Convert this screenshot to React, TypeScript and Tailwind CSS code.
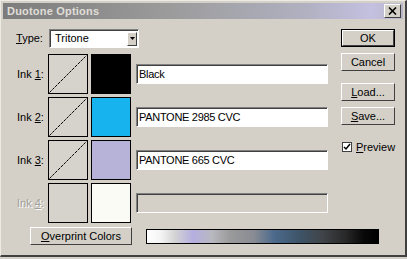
import React from "react";

const font = { fontFamily: '"Liberation Sans", Arial, sans-serif' };

function Btn({ children, def = false, w = "w-[54px]" }: { children: React.ReactNode; def?: boolean; w?: string }) {
  return (
    <div className={`${w} h-[18px] shrink-0 ${def ? "border border-black" : ""}`}>
      <div className="h-full w-full border-t border-l border-t-white border-l-white border-r border-b border-r-[#404040] border-b-[#404040] flex items-center justify-center text-[11px] text-black bg-[#d4d0c8] whitespace-nowrap">
        {children}
      </div>
    </div>
  );
}

function Field({ text, disabled = false }: { text?: string; disabled?: boolean }) {
  return (
    <div className="w-[192px] h-[20px] border-t border-l border-t-[#808080] border-l-[#808080] border-r border-b border-r-white border-b-white">
      <div className={`h-full w-full border-t border-l border-t-[#404040] border-l-[#404040] ${disabled ? "bg-[#d4d0c8]" : "bg-white"} flex items-center pl-[1px] text-[11px] text-black tracking-[-0.3px]`}>
        {text}
      </div>
    </div>
  );
}

function Curve({ line = true }: { line?: boolean }) {
  return (
    <div className="w-[40px] h-[40px] shrink-0 border border-black bg-[#d6d3cc] relative">
      {line && (
        <svg width="38" height="38" className="absolute left-0 top-0">
          <line x1="0.5" y1="37.5" x2="37.5" y2="0.5" stroke="#000" strokeWidth="1" strokeDasharray="3 1" />
        </svg>
      )}
    </div>
  );
}

function InkRow({ n, color, text, disabled = false }: { n: string; color: string; text?: string; disabled?: boolean }) {
  return (
    <div className="flex items-center h-[40px]">
      <div className={`w-[45px] shrink-0 pl-[14px] text-[11px] whitespace-nowrap ${disabled ? "text-[#a09e98] [text-shadow:1px_1px_0_#ffffff]" : "text-black"}`}>
        Ink <span className="underline">{n}</span>:
      </div>
      <Curve line={!disabled} />
      <div className="ml-[3px] w-[40px] h-[40px] shrink-0 border border-black" style={{ backgroundColor: color }} />
      <div className="ml-[5px]">
        <Field text={text} disabled={disabled} />
      </div>
    </div>
  );
}

export default function App() {
  return (
    <div style={font} className="w-[407px] h-[259px] bg-[#d4d0c8] overflow-hidden">
      <div className="w-[407px] h-[257px] border-t border-l border-t-[#ecebe6] border-l-[#ecebe6] border-r-2 border-b-2 border-r-[#404040] border-b-[#404040] p-[2px]">
        <div className="h-[16px] flex items-center justify-between pl-[4px] pr-[2px] bg-[linear-gradient(to_right,#7c7c7c_0%,#9a9a9a_40%,#b0b0c0_75%,#c4c0e0_92%,#b8b6c8_100%)]">
          <span className="text-[11px] font-bold text-[#e0ded8] tracking-[0.2px]">Duotone Options</span>
          <div className="w-[17px] h-[14px] bg-[#d4d0c8] border-t border-l border-t-white border-l-white border-r border-b border-r-[#404040] border-b-[#404040] flex items-center justify-center">
            <svg width="9" height="8" viewBox="0 0 9 8">
              <path d="M1 0.5 L8 7.5 M8 0.5 L1 7.5" stroke="#000" strokeWidth="1.6" />
            </svg>
          </div>
        </div>
        <div className="flex">
          <div className="w-[333px] shrink-0">
            <div className="flex items-center h-[18px] mt-[10px]">
              <div className="w-[46px] pl-[13px] text-[11px] text-black"><span className="underline">T</span>ype:</div>
              <div className="w-[90px] h-[19px] border-t border-l border-t-[#808080] border-l-[#808080] border-r border-b border-r-white border-b-white">
                <div className="h-full w-full border-t border-l border-t-[#404040] border-l-[#404040] bg-white flex items-center justify-between pl-[4px] pr-[1px] text-[11px]">
                  <span>Tritone</span>
                  <div className="w-[10px] h-[14px] bg-[#d4d0c8] border-t border-l border-t-white border-l-white border-r border-b border-r-[#404040] border-b-[#404040] flex items-center justify-center">
                    <svg width="5" height="3" viewBox="0 0 5 3"><path d="M0 0 H5 L2.5 3 Z" fill="#000" /></svg>
                  </div>
                </div>
              </div>
            </div>
            <div className="flex flex-col gap-[3px] mt-[7px]">
              <InkRow n="1" color="#000000" text="Black" />
              <InkRow n="2" color="#16b3ee" text="PANTONE 2985 CVC" />
              <InkRow n="3" color="#b6b2d8" text="PANTONE 665 CVC" />
              <InkRow n="4" color="#fbfbf6" disabled />
            </div>
            <div className="flex items-center mt-[4px] pl-[27px]">
              <Btn w="w-[102px]"><span><span className="underline">O</span>verprint Colors</span></Btn>
              <div className="ml-[14px] shrink-0 w-[233px] h-[15px] border border-black bg-[linear-gradient(to_right,#ffffff_0%,#f4f4f4_6%,#d4d4d4_12%,#b4aee0_20%,#b8b8c0_28%,#9a9a9a_36%,#8a8c94_46%,#4c6a8c_55%,#3e5468_66%,#404448_76%,#282828_86%,#080808_94%,#000000_100%)]" />
            </div>
          </div>
          <div className="flex flex-col gap-[6px] mt-[10px] ml-[5px]">
            <Btn def>OK</Btn>
            <Btn>Cancel</Btn>
            <div className="h-0" />
            <Btn><span><span className="underline">L</span>oad...</span></Btn>
            <Btn><span><span className="underline">S</span>ave...</span></Btn>
            <div className="flex items-center mt-[8px] ml-[1px]">
              <div className="w-[10px] h-[10px] bg-white border border-[#404040] flex items-center justify-center">
                <svg width="8" height="8" viewBox="0 0 8 8"><path d="M1 4 L3 6 L7 1" stroke="#000" strokeWidth="1.5" fill="none" /></svg>
              </div>
              <span className="ml-[4px] text-[11px]"><span className="underline">P</span>review</span>
            </div>
          </div>
        </div>
      </div>
    </div>
  );
}
